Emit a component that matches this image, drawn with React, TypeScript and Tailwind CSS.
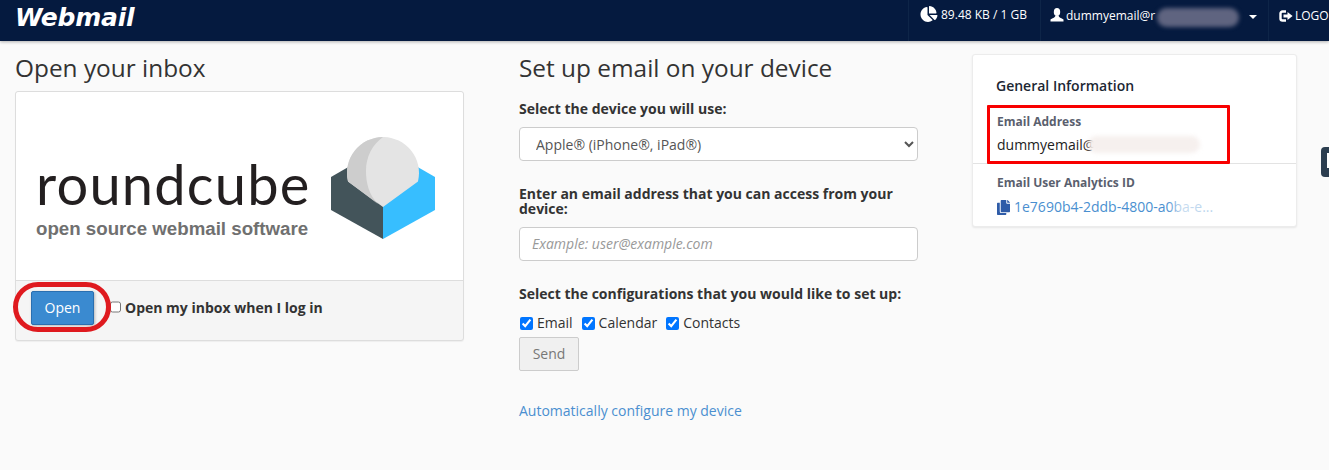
// Webmail Startseite mit Roundcube-Karte, Geräte-Formular und Info-Karte

import { FaChartPie, FaCopy } from "react-icons/fa";

function LogoutIcon() {
  return (
    <svg viewBox="0 0 14 12" className="w-[14px] h-[12px]" fill="none">
      <path d="M7 1.5H3.5A2 2 0 0 0 1.5 3.5v5a2 2 0 0 0 2 2H7" stroke="white" strokeWidth="2.4" />
      <path d="M4.5 4.6H8.5V2L13.6 6L8.5 10V7.4H4.5Z" fill="white" />
    </svg>
  );
}

function UserIcon() {
  return (
    <svg viewBox="0 0 14 14" className="w-[14px] h-[14px] shrink-0" fill="white">
      <ellipse cx="7" cy="4" rx="3.2" ry="4" />
      <path d="M0.5 13.5V11.6C2 10 5 10 5.5 7.5H8.5C9 10 12 10 13.5 11.6V13.5Z" />
    </svg>
  );
}

function RoundcubeCube() {
  return (
    <svg viewBox="0 0 104 103" className="w-[104px] h-[103px]">
      <path d="M0 40L52 10V102L0 73Z" fill="#43545a" />
      <path d="M104 40L52 10V102L104 73Z" fill="#37beff" />
      <path d="M17 44.4A36 36 0 1 1 87 44.4L52 70Z" fill="#e4e4e4" />
      <path d="M52 0A36 36 0 0 0 17 44.4L47 67C38 58 35 46 35 34C35 20 41 8 52 0Z" fill="#cdcdcd" />
    </svg>
  );
}

function Check({ label }: { label: string }) {
  return (
    <label className="flex items-center gap-[4px]">
      <input type="checkbox" defaultChecked className="w-[13px] h-[13px] m-0 accent-[#0075ff]" />
      <span>{label}</span>
    </label>
  );
}

export default function App() {
  return (
    <div
      className="relative w-[1329px] h-[470px] overflow-hidden bg-[#fafafa] text-[14px] text-[#333]"
      style={{ fontFamily: '"Open Sans", sans-serif' }}
    >
      {/* Kopfzeile */}
      <header className="flex items-stretch h-[41px] bg-[#051a3f] text-white shadow-[0_1px_3px_rgba(0,0,0,0.3)]">
        <div className="w-[908px] shrink-0 pl-[15px] pt-[1px]">
          <span
            className="block text-[25px] leading-[33px] font-bold italic tracking-[-0.2px]"
            style={{ fontFamily: '"DejaVu Sans", sans-serif' }}
          >
            Webmail
          </span>
        </div>
        <div className="w-[132px] shrink-0 flex items-start pt-[6px] gap-[3px] pl-[11px] border-l border-[#0e2548] text-[12px] font-medium">
          <FaChartPie className="w-[18px] h-[16px]" />
          <span className="leading-[18px]">89.48 KB / 1 GB</span>
        </div>
        <div className="relative w-[228px] shrink-0 flex items-start pt-[8px] gap-[2px] pl-[9px] border-l border-[#0e2548] text-[12px] font-medium">
          <UserIcon />
          <span className="leading-[16px]">dummyemail@r</span>
          <svg viewBox="0 0 8 4" className="absolute left-[208px] top-[15px] w-[8px] h-[4px]" fill="white">
            <path d="M0 0H8L4 4Z" />
          </svg>
          {/* Schwärzung */}
          <div className="absolute left-[116px] top-[8px] w-[82px] h-[19px] rounded-full bg-[#5f6480] blur-[2px]" />
        </div>
        <div className="flex-1 min-w-0 flex items-start pt-[7px] gap-[2px] pl-[10px] border-l border-[#0e2548] text-[12px] font-medium overflow-hidden">
          <div className="mt-[3px] shrink-0"><LogoutIcon /></div>
          <span className="leading-[18px] whitespace-nowrap">LOGOUT</span>
        </div>
      </header>

      <main className="flex items-start pl-[15px]">
        {/* Linke Spalte */}
        <section className="w-[449px] shrink-0 pt-[10px]">
          <h1 className="text-[24.4px] leading-[33px] text-[#333] mb-[7px]">Open your inbox</h1>
          <div className="h-[250px] rounded-[3px] border border-[#ddd] bg-[#f5f5f5] shadow-[0_1px_1px_rgba(0,0,0,0.05)] flex flex-col">
            <div className="h-[189px] shrink-0 bg-white border-b border-[#ddd] flex items-start pl-[20px] rounded-t-[3px]">
              <div className="w-[295px] shrink-0 pt-[62px]">
                <div
                  className="text-[56px] leading-[60px] text-[#231f20] tracking-[1.2px]"
                  style={{ fontFamily: '"Lato", sans-serif' }}
                >
                  roundcube
                </div>
                <div
                  className="mt-[3px] text-[18.7px] leading-[24px] font-bold text-[#707070] whitespace-nowrap"
                  style={{ fontFamily: '"Liberation Sans", sans-serif' }}
                >
                  open source webmail software
                </div>
              </div>
              <div className="pt-[45px]">
                <RoundcubeCube />
              </div>
            </div>
            <div className="flex items-center pl-[15px] pt-[10px]">
              <button className="relative w-[63px] h-[34px] pb-[2px] rounded-[2px] border border-[#2a6fb0] bg-[#3a8ad0] text-white text-[14px] shadow-[1px_1px_3px_rgba(0,0,0,0.25)]">
                Open
                {/* rote Markierung */}
                <span className="absolute left-[-19px] top-[-10px] w-[98px] h-[50px] rounded-[25px] border-[5px] border-[#df1a1f]" />
              </button>
              <input type="checkbox" className="w-[11px] h-[12px] ml-[16px] mr-[4px] mb-[3px]" />
              <span className="font-bold text-[14px] text-[#333] mb-[2px]">Open my inbox when I log in</span>
            </div>
          </div>
        </section>

        {/* Mittlere Spalte */}
        <section className="w-[399px] shrink-0 ml-[55px] pt-[10px]">
          <h1 className="text-[24.4px] leading-[33px] text-[#333] mb-[15px]">Set up email on your device</h1>
          <div className="font-bold leading-[20px] mb-[8px]">Select the device you will use:</div>
          <select className="w-full h-[34px] pl-[12px] rounded-[4px] border border-[#ccc] bg-white text-[14px] text-[#555]">
            <option>Apple® (iPhone®, iPad®)</option>
          </select>
          <div className="font-bold leading-[15px] mt-[25px] mb-[11px]">
            Enter an email address that you can access from your device:
          </div>
          <input
            placeholder="Example: user@example.com"
            className="block w-full h-[34px] px-[12px] pb-[2px] rounded-[4px] border border-[#ccc] bg-white text-[14px] placeholder:italic placeholder:text-[#999]"
          />
          <div className="font-bold leading-[20px] mt-[23px] mb-[9px]">Select the configurations that you would like to set up:</div>
          <div className="flex items-center gap-[9px] pl-[1px] leading-[20px] mb-[4px]">
            <Check label="Email" />
            <Check label="Calendar" />
            <Check label="Contacts" />
          </div>
          <button className="block w-[60px] h-[34px] pb-[2px] rounded-[2px] border border-[#ccc] bg-[#f0f0f0] text-[#777] text-[14px]">Send</button>
          <a className="block mt-[30px] leading-[20px] text-[#4a8fd0]">Automatically configure my device</a>
        </section>

        {/* Rechte Karte */}
        <aside className="relative w-[325px] shrink-0 ml-[54px] mt-[13px] h-[173px] rounded-[3px] bg-white border border-[#ececec] shadow-[0_1px_2px_rgba(0,0,0,0.08)] text-[#333]">
          <div className="pl-[23px] pt-[21px] text-[14px] font-semibold leading-[20px] text-[#1c2733]">General Information</div>
          <div className="pl-[24px] pt-[18px] pb-[8px] border-b border-[#e3e3e3]">
            <div className="text-[12px] font-bold text-[#5a5f6e] leading-[16px] mb-[5px]">Email Address</div>
            <div className="text-[14px] leading-[20px] text-[#222]">dummyemail@</div>
          </div>
          <div className="pl-[24px] pt-[11px]">
            <div className="text-[12px] font-bold text-[#5a5f6e] leading-[16px] mb-[6px]">Email User Analytics ID</div>
            <div className="relative flex items-center gap-[4px] text-[14px] leading-[20px] text-[#4a8fd0]">
              <FaCopy className="w-[13px] h-[15px] text-[#2f5ca8]" />
              <span>1e7690b4-2ddb-4800-a0ba-e...</span>
              <div className="absolute left-[170px] top-0 w-[50px] h-[20px] bg-gradient-to-r from-transparent via-white/70 via-30% to-white/60" />
            </div>
          </div>
          {/* Schwärzung und rote Box */}
          <div className="absolute left-[115px] top-[81px] w-[112px] h-[17px] rounded-full bg-[#f6f0ee] blur-[2px]" />
          <div className="absolute left-[14px] top-[50px] w-[243px] h-[59px] rounded-[1px] border-[3px] border-[#f80000]" />
        </aside>
      </main>

      {/* seitlicher Reiter */}
      <div className="absolute left-[1321px] top-[147px] w-[12px] h-[30px] rounded-l-[4px] bg-[#2c3e50]">
        <div className="ml-[6px] mt-[6px] w-[4px] h-[15px] bg-white" />
      </div>
    </div>
  );
}
